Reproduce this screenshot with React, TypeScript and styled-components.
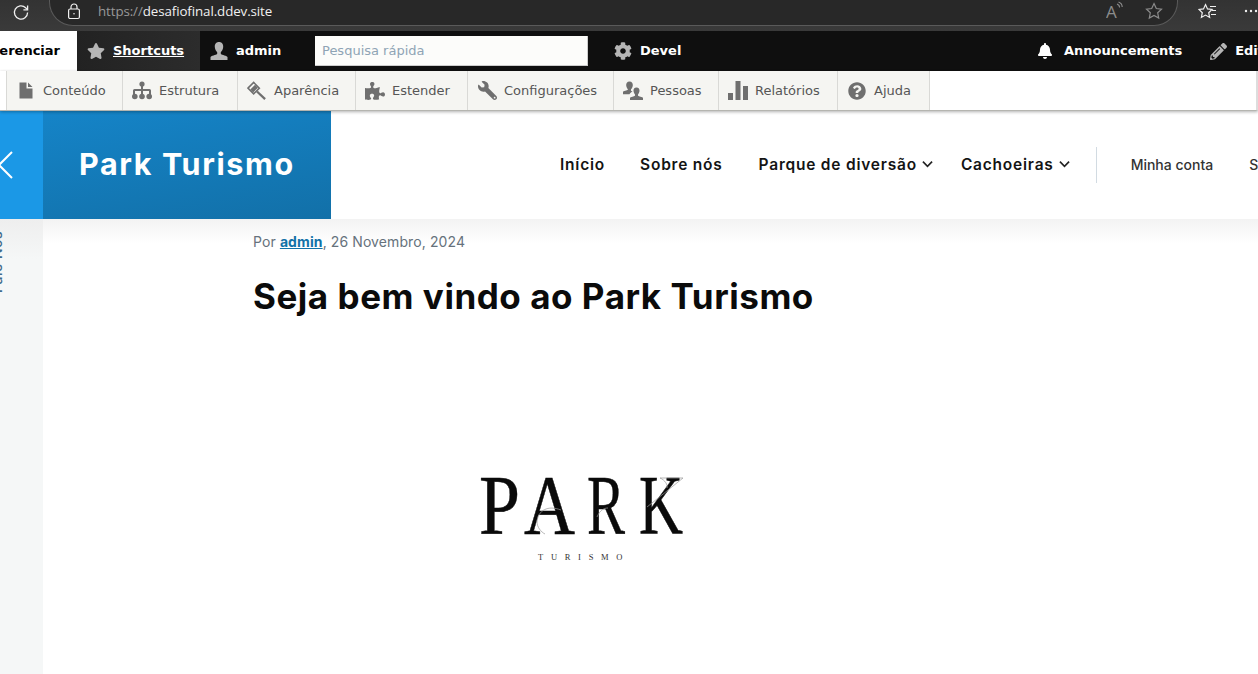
import React from "react";
import styled, { createGlobalStyle } from "styled-components";
import { FaStar, FaPuzzlePiece, FaWrench, FaQuestionCircle, FaBell, FaPencilAlt, FaCog } from "react-icons/fa";

const Global = createGlobalStyle`
  html, body { margin: 0; padding: 0; background: #fff; overflow: hidden; height: 674px; }
  * { box-sizing: border-box; }
`;
const Page = styled.div`width: 1258px; height: 674px; overflow: hidden; position: relative;`;

const BrowserBar = styled.div`
  height: 31px; background: linear-gradient(#333, #3a3a3a); display: flex; color: #eee;
  font-family: "Open Sans", "Noto Sans", sans-serif;
`;
const ReloadSlot = styled.div`width: 50px; display: flex; align-items: flex-start; padding: 3px 0 0 12px;`;
const AddressPill = styled.div`
  width: 1129px; height: 27px; margin-top: -1px; background: #282828; flex-shrink: 0;
  border: 1px solid #5a5a5a; border-top: 0; border-radius: 0 0 24px 24px;
  display: flex; align-items: center; padding: 0 14px 2px 17px;
`;
const Url = styled.span`margin-left: 17px; font-size: 13.35px; color: #f0f0f0; letter-spacing: -0.1px;`;
const UrlScheme = styled.span`color: #989898;`;
const PillActions = styled.div`margin-left: auto; display: flex; align-items: center; gap: 21px;`;
const BrowserActions = styled.div`display: flex; align-items: flex-start; padding: 3px 0 0 20px; gap: 27px;`;

const AdminBar = styled.div`
  height: 40px; background: #0f0f0f; display: flex; align-items: stretch;
  font: bold 13px/38px "DejaVu Sans", Verdana, sans-serif; color: #fff; white-space: nowrap;
`;
const ManageTab = styled.div`
  width: 107px; margin-left: -30px; background: #fff; color: #000; display: flex; align-items: center;
  justify-content: flex-end; padding-right: 17px;
`;
const BarTab = styled.div<{ $w?: number; $bg?: string; $pad?: number; $gap?: number; $ml?: number }>`
  display: flex; align-items: center; flex-shrink: 0;
  gap: ${(p) => p.$gap ?? 8}px;
  padding-left: ${(p) => p.$pad ?? 9}px;
  margin-left: ${(p) => p.$ml ?? 0}px;
  width: ${(p) => (p.$w ? `${p.$w}px` : "auto")};
  background: ${(p) => p.$bg || "transparent"};
`;
const UnderlinedLabel = styled.span`text-decoration: underline;`;
const SearchInput = styled.input`
  width: 273px; height: 30px; margin: 5px 0 0 0; background: #fcfcfa; border: 1px solid #ccc; border-width: 0 1px 1px 0;
  padding: 0 7px; font: 13px "DejaVu Sans", Verdana, sans-serif;
  &::placeholder { color: #8fa4b5; opacity: 1; }
`;
const RightGroup = styled.div`margin-left: auto; margin-right: -6px; display: flex; align-items: stretch; gap: 28px;`;

const Tray = styled.div`
  height: 40px; background: #fff; display: flex; padding-left: 6px; border-bottom: 1px solid #b5b5b0; border-right: 2px solid #ddd;
  box-shadow: 0 1px 3px rgba(0,0,0,.3); position: relative; z-index: 3;
  font: 13px "DejaVu Sans", Verdana, sans-serif; color: #565656; white-space: nowrap;
`;
const TrayItem = styled.div<{ $w: number }>`
  display: flex; align-items: center; gap: 7px; padding-left: 9px; background: #f5f5f2; width: ${(p) => p.$w}px;
  border-right: 1px solid #d9d9d6; &:first-child { border-left: 1px solid #d9d9d6; }
`;
const IconBox = styled.span`width: 20px; height: 20px; display: flex; align-items: center; justify-content: center; color: #6f6f6f;`;
const FlippedIcon = styled.span`display: flex; transform: scaleX(-1);`;

const Header = styled.header`height: 108px; display: flex; background: #fff; white-space: nowrap;`;
const BackTab = styled.div`width: 43px; background: #1b98e6; display: flex; align-items: center; overflow: hidden;`;
const Brand = styled.div`
  width: 288px; background: linear-gradient(170deg, #1584c8, #1270a8); color: #fff;
  display: flex; align-items: center; padding-left: 36px; padding-bottom: 4px;
  font: 700 30.5px Inter, "Open Sans", sans-serif; letter-spacing: 1.6px;
`;
const Nav = styled.nav`
  flex: 1; display: flex; align-items: center; padding: 0 0 2px 229px; overflow: hidden;
  font: 600 15.5px Inter, "Open Sans", sans-serif; letter-spacing: 0.78px; color: #141414;
`;
const NavLink = styled.span<{ $gap: number }>`
  display: flex; align-items: center; gap: 5px; margin-right: ${(p) => p.$gap}px; flex-shrink: 0;
`;
const NavDivider = styled.span`width: 1px; height: 36px; background: #d2dbe2; margin: 2px 34px 0 0; flex-shrink: 0;`;
const SubLink = styled.span<{ $gap?: number }>`
  font: 500 14px Inter, "Open Sans", sans-serif; letter-spacing: 0; color: #333; margin-right: ${(p) => p.$gap || 0}px; flex-shrink: 0;
`;

const Body = styled.div`display: flex; height: 455px; background: #fff;`;
const SideRail = styled.aside`
  width: 43px; background: linear-gradient(#eeeeee, #f5f7f7 40px); position: relative; overflow: hidden; flex-shrink: 0;
`;
const SideLabel = styled.span`
  position: absolute; left: -12px; top: 12px; writing-mode: vertical-rl; transform: rotate(180deg);
  font: 500 14px Inter, "Open Sans", sans-serif; letter-spacing: 0.5px; color: #3f6c8c; white-space: nowrap;
`;
const Main = styled.main`
  flex: 1; padding: 14px 0 0 210px; position: relative;
  background: linear-gradient(#f3f3f3, #fff 24px);
`;
const Meta = styled.div`font: 400 14px Inter, "Open Sans", sans-serif; letter-spacing: 0.1px; color: #66727c; line-height: 18px;`;
const Author = styled.a`color: #1272a8; font-weight: 700; text-decoration: underline;`;
const Title = styled.h1`
  margin: 23px 0 0; font: 700 35px/44px Inter, "Open Sans", sans-serif; color: #0b0b0b; letter-spacing: 0.54px;
`;
const LogoWrap = styled.div`margin: 158px 0 0 225px; width: 210px; height: 90px;`;

const Reload = () => (
  <svg width="19" height="19" viewBox="0 0 19 19" fill="none" stroke="#f0f0f0" strokeWidth="1.3">
    <path d="M15.6 9.5a6.6 6.6 0 1 1-2-4.8L15.5 6.6" />
    <path d="M15.6 2.6v4.2h-4.2" />
  </svg>
);
const LockIcon = () => (
  <svg width="14" height="17" viewBox="0 0 14 17" fill="none" stroke="#f0f0f0" strokeWidth="1.2">
    <rect x="1.6" y="6" width="10.8" height="9.5" rx="1.5" />
    <path d="M4 6V4a3 3 0 0 1 6 0v2" />
    <circle cx="7" cy="10.7" r=".8" fill="#f0f0f0" stroke="none" />
  </svg>
);
const ReadAloud = () => (
  <svg width="18" height="20" viewBox="0 0 18 20" fill="none" stroke="#8c8c8c" strokeWidth="1.1">
    <text x="0" y="17" fontSize="17" fontFamily="Open Sans" fill="#8c8c8c" stroke="none">A</text>
    <path d="M11 3c1.600.6 2.600 2 2.600 3.500M12.500 1c2.200.8 3.700 2.800 3.700 5" />
  </svg>
);
const StarOutline = ({ color = "#8c8c8c" }: { color?: string }) => (
  <svg width="18" height="18" viewBox="0 0 18 18" fill="none" stroke={color} strokeWidth="1.2">
    <path d="M9 1.6l2.3 4.9 5.2.7-3.8 3.6 1 5.3L9 13.5l-4.7 2.6 1-5.3L1.5 7.2l5.2-.7z" />
  </svg>
);
const FavList = () => (
  <svg width="19" height="18" viewBox="0 0 19 18" fill="none" stroke="#f0f0f0" strokeWidth="1.2">
    <path d="M7.5 1.6l2 4.3 4.5.6-3.3 3.2.9 4.7-4.1-2.3-4.1 2.3.9-4.7L1 6.5l4.5-.6z" />
    <path d="M12 3.5h6M14 7.5h4M13 11.5h5" />
  </svg>
);
const Dots = () => (
  <svg width="14" height="18" viewBox="0 0 14 18" fill="#f0f0f0">
    <circle cx="2" cy="8" r="1.2" /><circle cx="7" cy="8" r="1.2" /><circle cx="12" cy="8" r="1.2" />
  </svg>
);
const UserIcon = ({ color = "#b5b5b5", size = 20 }: { color?: string; size?: number }) => (
  <svg width={size} height={size} viewBox="0 0 20 20" fill={color}>
    <path d="M10 1c3 0 4.4 2.3 4.2 5-.2 2.6-1.4 4.2-2.4 5.2v1.6c0 1 4.5 1.4 6.7 3.2V19H1.5v-3c2.2-1.8 6.7-2.2 6.7-3.2v-1.6C7.200 10.200 6 8.600 5.800 6 5.600 3.300 7 1 10 1z" />
  </svg>
);
const FileIcon = () => (
  <svg width="14" height="17" viewBox="0 0 14 17" fill="#6f6f6f"><path d="M0.500 .5h7v6h6v10H.5zM9 .5l4.500 4.500H9z" /></svg>
);
const SitemapIcon = () => (
  <svg width="20" height="19" viewBox="0 0 20 19" fill="#6f6f6f">
    <circle cx="10" cy="3" r="2.6" /><circle cx="2.800" cy="15.500" r="2.800" /><circle cx="10" cy="15.500" r="2.800" /><circle cx="17.200" cy="15.500" r="2.800" />
    <path d="M9 4h2v4h6.500a1.500 1.500 0 0 1 1.500 1.500V14h-2v-4h-6v4H9v-4H3v4H1V9.500A1.500 1.500 0 0 1 2.500 8H9z" />
  </svg>
);
const HammerIcon = () => (
  <svg width="21" height="20" viewBox="0 0 21 20" fill="none">
    <path d="M1 7L7 1l6 6-6 6z" stroke="#6f6f6f" strokeWidth="1.600" fill="#f5f5f2" />
    <path d="M3.500 8.500L8.500 3.500l3 3-5 5z" fill="#6f6f6f" />
    <path d="M10.500 10.500l8.500 8" stroke="#6f6f6f" strokeWidth="2.400" />
  </svg>
);
const PeopleIcon = () => (
  <svg width="20" height="19" viewBox="0 0 20 19" fill="#6f6f6f">
    <path d="M6.500 .5c2.400 0 3.500 1.800 3.300 3.900-.2 1.900-1 3.100-1.800 3.900v1.400l1.500.7c-1.200.8-2.600 1.500-3 2.900H0v-2.500c1.500-1.300 5-1.500 5-2.500V8.300C4.200 7.500 3.400 6.300 3.200 4.400 3 2.300 4.100.5 6.500.5z" />
    <path d="M13.500 6.500c2.200 0 3.200 1.600 3 3.500-.2 1.600-.8 2.700-1.500 3.400v1.100c0 .8 3 1 5 2.200V19H7v-2.300c2-1.200 5-1.400 5-2.200v-1.100c-.7-.7-1.300-1.800-1.500-3.400-.2-1.900.8-3.500 3-3.500z" />
  </svg>
);
const BarsIcon = () => (
  <svg width="20" height="19" viewBox="0 0 20 19" fill="#6f6f6f">
    <rect x="0" y="12" width="5" height="7" /><rect x="7.500" y="0" width="5" height="19" /><rect x="15" y="5" width="5" height="14" />
  </svg>
);
const ChevronBack = () => (
  <svg width="14" height="28" viewBox="0 0 14 28" fill="none" stroke="#fff" strokeWidth="2">
    <path d="M12 1L-1 14l13 13" />
  </svg>
);
const ChevronDown = () => (
  <svg width="11" height="8" viewBox="0 0 12 8" fill="none" stroke="#222" strokeWidth="1.800"><path d="M1 1.500l5 5 5-5" /></svg>
);
const letters: [string, number, number][] = [["P", 1, 41], ["A", 46, 51], ["R", 109, 38], ["K", 161, 44]];
const ParkLogo = () => (
  <svg width="210" height="90" viewBox="0 0 210 90">
    {letters.map(([ch, x, w]) => (
      <text key={ch} x={x} y="58" fontFamily="Liberation Serif" fontSize="85" textLength={w} lengthAdjust="spacingAndGlyphs" fill="#0a0a0a" stroke="#0a0a0a" strokeWidth=".5">{ch}</text>
    ))}
    <g fill="none" stroke="#9a9a9a" strokeWidth=".7" transform="translate(0 1)">
      <path d="M59 45C60 33 70 28 83 33" /><path d="M59 45C59 50 63 55 67 57" />
      <path d="M119 40C122 33 126 31 130 31" />
      <path d="M169 30L205 1H182C187 3 190 8 189 11" />
    </g>
    <text x="60" y="84" fontFamily="Liberation Serif" fontSize="8.500" letterSpacing="7.700" fill="#333">TURISMO</text>
  </svg>
);

const trayItems: [React.ReactNode, string, number][] = [
  [<FileIcon />, "Conteúdo", 117],
  [<SitemapIcon />, "Estrutura", 115],
  [<HammerIcon />, "Aparência", 118],
  [<FaPuzzlePiece size={20} color="#6f6f6f" />, "Estender", 112],
  [<FlippedIcon><FaWrench size={19} color="#6f6f6f" /></FlippedIcon>, "Configurações", 146],
  [<PeopleIcon />, "Pessoas", 105],
  [<BarsIcon />, "Relatórios", 119],
  [<FaQuestionCircle size={18} color="#6f6f6f" />, "Ajuda", 92],
];

export default function App() {
  return (
    <Page>
      <Global />
      <BrowserBar>
        <ReloadSlot><Reload /></ReloadSlot>
        <AddressPill>
          <LockIcon />
          <Url><UrlScheme>https://</UrlScheme>desafiofinal.ddev.site</Url>
          <PillActions><ReadAloud /><StarOutline /></PillActions>
        </AddressPill>
        <BrowserActions><FavList /><Dots /></BrowserActions>
      </BrowserBar>
      <AdminBar>
        <ManageTab>Gerenciar</ManageTab>
        <BarTab $w={123} $pad={10} $bg="linear-gradient(90deg,#222,#2c2c2c)">
          <FaStar size={18} color="#b5b5b5" />
          <UnderlinedLabel>Shortcuts</UnderlinedLabel>
        </BarTab>
        <BarTab $w={115} $gap={7} $bg="#0f0f0f"><UserIcon /><span>admin</span></BarTab>
        <SearchInput placeholder="Pesquisa rápida" />
        <BarTab $w={100} $ml={17}><FaCog size={18} color="#b5b5b5" /><span>Devel</span></BarTab>
        <RightGroup>
          <BarTab $gap={11}><FaBell size={16} color="#fff" /><span>Announcements</span></BarTab>
          <BarTab $pad={0}><FaPencilAlt size={17} color="#b5b5b5" /><span>Edit</span></BarTab>
        </RightGroup>
      </AdminBar>
      <Tray>
        {trayItems.map(([icon, label, w]) => (
          <TrayItem key={label} $w={w}><IconBox>{icon}</IconBox><span>{label}</span></TrayItem>
        ))}
      </Tray>
      <Header>
        <BackTab><ChevronBack /></BackTab>
        <Brand>Park Turismo</Brand>
        <Nav>
          <NavLink $gap={35}>Início</NavLink>
          <NavLink $gap={36}>Sobre nós</NavLink>
          <NavLink $gap={28}>Parque de diversão <ChevronDown /></NavLink>
          <NavLink $gap={26}>Cachoeiras <ChevronDown /></NavLink>
          <NavDivider />
          <SubLink $gap={36}>Minha conta</SubLink>
          <SubLink>Sair</SubLink>
        </Nav>
      </Header>
      <Body>
        <SideRail><SideLabel>Fale Nós</SideLabel></SideRail>
        <Main>
          <Meta>Por <Author>admin</Author>, 26 Novembro, 2024</Meta>
          <Title>Seja bem vindo ao Park Turismo</Title>
          <LogoWrap><ParkLogo /></LogoWrap>
        </Main>
      </Body>
    </Page>
  );
}
